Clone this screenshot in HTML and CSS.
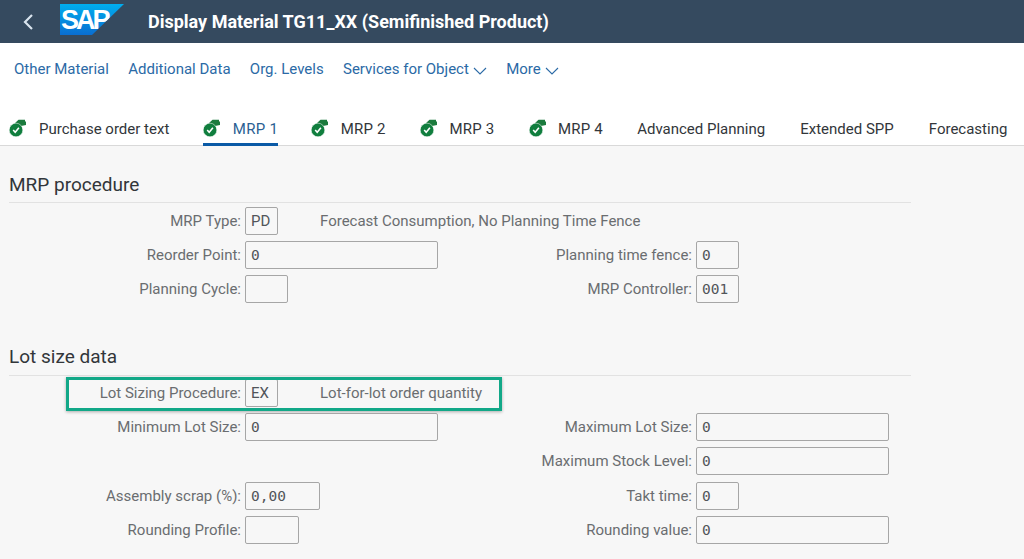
FILE: index.html
```html
<!DOCTYPE html>
<html lang="en">
<head>
<meta charset="utf-8">
<title>Display Material</title>
<link rel="stylesheet" href="styles.css">
</head>
<body>
<header class="shell">
  <svg class="back" viewBox="0 0 12 18" width="12" height="18"><path d="M10 2 L3 9 L10 16" fill="none" stroke="#d9e4ee" stroke-width="2.2"/></svg>
  <div class="logo"><span class="logo-text">SAP</span></div>
  <h1 class="title">Display Material TG11_XX (Semifinished Product)</h1>
</header>
<nav class="toolbar">
  <a>Other Material</a>
  <a>Additional Data</a>
  <a>Org. Levels</a>
  <a>Services for Object<svg class="chev" viewBox="0 0 14 8" width="14" height="8"><path d="M1 1 L7 7 L13 1" fill="none" stroke="#2b6aa6" stroke-width="1.1"/></svg></a>
  <a>More<svg class="chev" viewBox="0 0 14 8" width="14" height="8"><path d="M1 1 L7 7 L13 1" fill="none" stroke="#2b6aa6" stroke-width="1.1"/></svg></a>
</nav>
<div class="tabs">
  <div class="tab t1"><svg class="ti" viewBox="0 0 18 18" width="18" height="18"><use href="#st"/></svg><span>Purchase order text</span></div>
  <div class="tab t2 active"><svg class="ti" viewBox="0 0 18 18" width="18" height="18"><use href="#st"/></svg><span>MRP 1</span></div>
  <div class="tab t3"><svg class="ti" viewBox="0 0 18 18" width="18" height="18"><use href="#st"/></svg><span>MRP 2</span></div>
  <div class="tab t3"><svg class="ti" viewBox="0 0 18 18" width="18" height="18"><use href="#st"/></svg><span>MRP 3</span></div>
  <div class="tab t3"><svg class="ti" viewBox="0 0 18 18" width="18" height="18"><use href="#st"/></svg><span>MRP 4</span></div>
  <div class="tab t4"><span>Advanced Planning</span></div>
  <div class="tab t4"><span>Extended SPP</span></div>
  <div class="tab t4"><span>Forecasting</span></div>
</div>
<svg class="defs" width="0" height="0"><defs><g id="st">
  <path d="M5 5 L9.5 0.8 L16 0.8 L16 2.6 L17 2.6 L17 6 L12 7 L9 5Z" fill="#1b7a3d"/>
  <circle cx="7" cy="11" r="6.8" fill="#107e3e" stroke="#fff" stroke-width="0.5"/>
  <path d="M4.2 11 L6.2 13.2 L9.9 8.8" fill="none" stroke="#fff" stroke-width="1.6"/>
</g></defs></svg>
<main class="content">
  <section class="group g1">
    <h2>MRP procedure</h2>
    <div class="rows">
      <div class="row">
        <div class="cell"><label>MRP Type:</label><span class="f w33">PD</span><span class="desc">Forecast Consumption, No Planning Time Fence</span></div>
      </div>
      <div class="row">
        <div class="cell"><label>Reorder Point:</label><span class="f w193 mono">0</span></div>
        <div class="cell right"><label>Planning time fence:</label><span class="f w43 mono">0</span></div>
      </div>
      <div class="row">
        <div class="cell"><label>Planning Cycle:</label><span class="f w43"></span></div>
        <div class="cell right"><label>MRP Controller:</label><span class="f w43 mono">001</span></div>
      </div>
    </div>
  </section>
  <section class="group g2">
    <h2>Lot size data</h2>
    <div class="rows">
      <div class="row">
        <div class="cell"><label>Lot Sizing Procedure:</label><span class="f w33">EX</span><span class="desc">Lot-for-lot order quantity</span></div>
        <div class="mark"></div>
      </div>
      <div class="row">
        <div class="cell"><label>Minimum Lot Size:</label><span class="f w193 mono">0</span></div>
        <div class="cell right"><label>Maximum Lot Size:</label><span class="f w193 mono">0</span></div>
      </div>
      <div class="row">
        <div class="cell"></div>
        <div class="cell right"><label>Maximum Stock Level:</label><span class="f w193 mono">0</span></div>
      </div>
      <div class="row">
        <div class="cell"><label>Assembly scrap (%):</label><span class="f w75 mono">0,00</span></div>
        <div class="cell right"><label>Takt time:</label><span class="f w43 mono">0</span></div>
      </div>
      <div class="row">
        <div class="cell"><label>Rounding Profile:</label><span class="f w54"></span></div>
        <div class="cell right"><label>Rounding value:</label><span class="f w193 mono">0</span></div>
      </div>
    </div>
  </section>
</main>
</body>
</html>
```
FILE: styles.css
```css
* { box-sizing: border-box; }
html, body { margin: 0; height: 100%; }
body { width: 1024px; height: 559px; overflow: hidden; background: #f7f7f7; font-family: Roboto, Arial, sans-serif; font-size: 15px; color: #32363a; }
.shell { height: 43px; background: #354a5f; display: flex; align-items: center; padding-left: 22px; }
.back { flex: none; }
.logo { flex: none; width: 64px; height: 31px; margin-left: 26px; align-self: flex-start; margin-top: 4px; background: linear-gradient(to bottom, #00aeef, #0a6ed1); clip-path: polygon(0 0, 100% 0, 50% 100%, 0 100%); overflow: hidden; }
.logo-text { display: block; padding: 3px 0 0 1px; font-family: "Liberation Sans", Arial, sans-serif; font-weight: 700; font-size: 27px; letter-spacing: -3px; line-height: 26px; color: #fff; }
.title { margin: 0 0 0 24px; font-size: 18px; font-weight: 700; color: #fff; white-space: nowrap; }
.toolbar { height: 60px; background: #fff; display: flex; gap: 19.3px; padding: 16px 0 0 14px; color: #2b6aa6; line-height: 20px; }
.toolbar a { display: flex; align-items: center; height: 20px; white-space: nowrap; }
.chev { margin-left: 4px; margin-top: 3px; }
.tabs { height: 43px; background: #fff; border-bottom: 1px solid #d9d9d9; display: flex; padding-left: 9px; }
.tab { display: flex; align-items: flex-start; padding-top: 16px; height: 42px; white-space: nowrap; line-height: 20px; }
.ti { flex: none; margin-right: 11.5px; }
.t1 { margin-right: 34px; }
.t1 .ti { margin-right: 12px; }
.t2 { margin-right: 33px; color: #2b5f93; border-bottom: 3px solid #0a5aa6; height: 43px; }
.t2 span { letter-spacing: .3px; }
.t3 span { letter-spacing: .2px; }
.t3 { margin-right: 34.2px; }
.t4 { margin-right: 35px; }
.defs { position: absolute; }
.content { padding: 0 113px 0 9px; }
.group h2 { margin: 0; font-size: 19px; font-weight: 400; line-height: 24px; height: 33px; padding-top: 3px; border-bottom: 1px solid #e2e2e2; color: #32363a; }
.g1 { padding-top: 24px; }
.g2 { padding-top: 34px; }
.g2 h2 { padding-top: 2px; }
.g1 .rows { padding-top: 4px; }
.g2 .rows { padding-top: 3px; }
.rows { display: flex; flex-direction: column; }
.row { position: relative; display: flex; height: 34.2px; align-items: flex-start; }
.g1 .row { height: 34px; }
.cell { width: 432px; display: flex; align-items: center; height: 28px; }
.cell label { width: 236px; text-align: right; padding-right: 4px; color: #6a6d70; white-space: nowrap; flex: none; }
.right label { width: 255px; }
.right { width: 470px; }
.f { display: block; height: 28px; border: 1px solid #a6a6a6; border-radius: 2px; background: #f7f7f7; padding: 0 5px; line-height: 26px; color: #51555a; flex: none; }
.mono { font-family: "DejaVu Sans Mono", monospace; font-size: 14.5px; }
.w33 { width: 33px; }
.w43 { width: 43px; }
.w54 { width: 54px; }
.w75 { width: 75px; }
.w193 { width: 193px; }
.desc { margin-left: 42px; color: #6a6d70; white-space: nowrap; }
.mark { position: absolute; left: 57px; top: -2px; width: 436px; height: 34px; border: 3px solid #12a888; box-shadow: 0 1px 3px rgba(0,0,0,.3); }
```
